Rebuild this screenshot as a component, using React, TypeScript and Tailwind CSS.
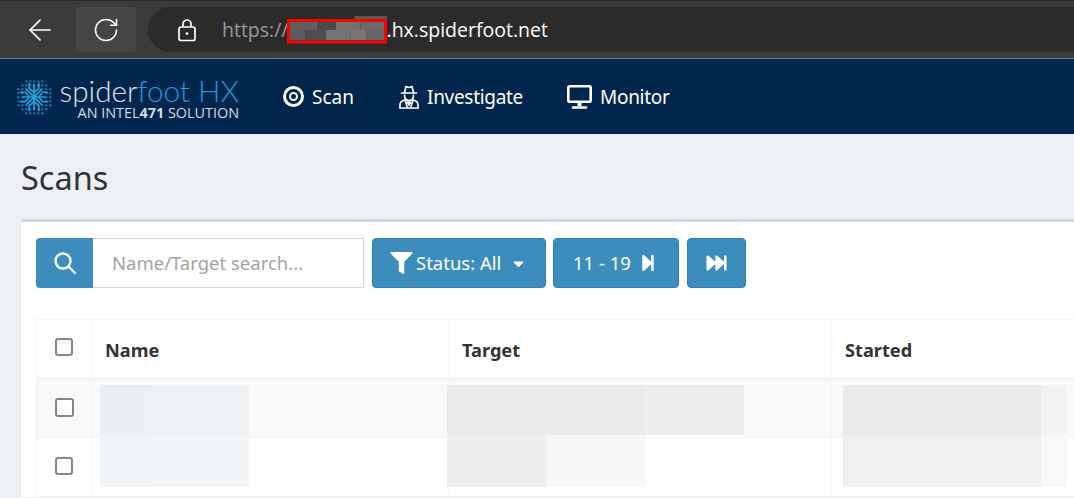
import { ArrowLeft, RotateCw } from "lucide-react";
import { FaFilter, FaStepForward, FaFastForward, FaCaretDown } from "react-icons/fa";

const PIXELS = [
  [0, 4, 30, 10, "#5f5f5f"], [30, 4, 18, 10, "#4a4a4a"], [48, 4, 24, 10, "#76706c"], [72, 4, 26, 10, "#6a6a6a"],
  [0, 14, 18, 10, "#5c5c5c"], [18, 14, 20, 10, "#4e4e4e"], [38, 14, 24, 10, "#6e7478"], [62, 14, 16, 10, "#7c7672"],
  [78, 14, 20, 10, "#666666"], [66, 0, 32, 4, "#5a5a5a"], [0, 24, 98, 3, "#383838"],
];

function Logo() {
  const dots: [number, number][] = [];
  for (let x = 0; x < 9; x++) for (let y = 0; y < 9; y++) {
    const d = Math.hypot(x - 4, y - 4);
    if (d > 2.6 && d < 4.7) dots.push([2.5 + x * 4.2, 2.5 + y * 4.2]);
  }
  return (
    <svg viewBox="0 0 38 38" className="h-[36px] w-[36px] shrink-0">
      {dots.map(([x, y], i) => <circle key={i} cx={x} cy={y} r="1.3" fill="#17729f" />)}
      <g stroke="#22a3dc" strokeWidth="1.8" fill="none">
        <path d="M19 5v28M7 19h24M11 11l16 16M27 11L11 27" />
        <path d="M14 4v6l5 4M24 4v6l-5 4M14 34v-6l5-4M24 34v-6l-5-4M4 14h6l4 5M4 24h6l4-5M34 14h-6l-4 5M34 24h-6l-4-5" />
      </g>
    </svg>
  );
}

function SpyIcon() {
  return (
    <svg viewBox="0 0 20 24" className="h-[24px] w-[20px] shrink-0" fill="none" stroke="white" strokeWidth="1.7" strokeLinejoin="round" strokeLinecap="round">
      <path d="M5.500 7.500 7 1.500l3 1 3-1 1.500 6" />
      <path d="M2.500 8h15" />
      <path d="M5.500 10c0 3.500 1.800 5.500 4.500 5.500s4.500-2 4.500-5.500" />
      <path d="M1 23v-3c0-2.500 2-4.500 5-5l2.500 8M19 23v-3c0-2.500-2-4.500-5-5l-2.500 8" />
      <path d="M1 23h18M8.500 17h3L10 20z" />
    </svg>
  );
}

function MonitorIcon() {
  return (
    <svg viewBox="0 0 25 24" className="h-[24px] w-[25px] shrink-0" fill="none" stroke="white" strokeWidth="2.600" strokeLinejoin="round">
      <rect x="1.300" y="1.300" width="22.400" height="15.400" rx="1.500" />
      <path d="M12.500 17v4" strokeWidth="4" />
      <path d="M6 22.500h13" strokeLinecap="round" />
    </svg>
  );
}

function Box({ big }: { big?: boolean }) {
  return <span className={`block rounded-[3px] border-2 border-[#858585] bg-white ${big ? "h-[19px] w-[19px]" : "h-[18px] w-[18px]"}`} />;
}

function Row({ tone, big, lift, height }: { tone: string; big?: boolean; lift: string; height: string }) {
  return (
    <div className={`grid grid-cols-[55px_357px_383px_1fr] border-b border-l border-[#f4f4f4] ${height} ${tone}`}>
      <div className={`flex items-center justify-center border-r border-[#f4f4f4] ${lift}`}><Box big={big} /></div>
      <div className="border-r border-[#f4f4f4]" />
      <div className="border-r border-[#f4f4f4]" />
      <div />
    </div>
  );
}

const PATCHES = [
  ["left-[64px] top-[66px] h-[50px] w-[50px]", "bg-[#eceff1]"], ["left-[114px] top-[66px] h-[50px] w-[99px]", "bg-[#eef1f3]"],
  ["left-[411px] top-[66px] h-[50px] w-[99px]", "bg-[#ebebeb]"], ["left-[510px] top-[66px] h-[50px] w-[99px]", "bg-[#ebebeb]"], ["left-[609px] top-[66px] h-[50px] w-[99px]", "bg-[#edeeee]"],
  ["left-[807px] top-[66px] h-[50px] w-[99px]", "bg-[#eaeaea]"], ["left-[906px] top-[66px] h-[50px] w-[99px]", "bg-[#ebebeb]"], ["left-[1005px] top-[66px] h-[50px] w-[26px]", "bg-[#f3f3f3]"],
  ["left-[64px] top-[116px] h-[52px] w-[50px]", "bg-[#f1f5f8]"], ["left-[114px] top-[116px] h-[52px] w-[99px]", "bg-[#f2f6f9]"],
  ["left-[411px] top-[116px] h-[52px] w-[99px]", "bg-[#eeeeee]"], ["left-[510px] top-[116px] h-[52px] w-[99px]", "bg-[#f7f7f7]"], ["left-[609px] top-[116px] h-[52px] w-[99px]", "bg-[#fdfdfd]"],
  ["left-[807px] top-[116px] h-[52px] w-[99px]", "bg-[#efefef]"], ["left-[906px] top-[116px] h-[52px] w-[99px]", "bg-[#efefef]"], ["left-[1005px] top-[116px] h-[52px] w-[26px]", "bg-[#f8f8f8]"],
];

export default function App() {
  return (
    <div className="h-[498px] w-[1074px] overflow-hidden bg-[#ecf0f5] font-['Noto_Sans',sans-serif]">
      {/* browser bar */}
      <div className="flex h-[59px] items-center border-y border-t-[#2a2a2a] border-b-[#7a7a7a] bg-[#3b3b3b] pl-[23px]">
        <div className="flex w-[53px] items-center"><ArrowLeft className="h-[34px] w-[34px] text-white" strokeWidth={1.200} /></div>
        <div className="flex h-[45px] w-[60px] items-center justify-center rounded-[4px] bg-[#454545]"><RotateCw className="h-[28px] w-[28px] text-white" strokeWidth={1.300} /></div>
        <div className="ml-[12px] flex h-[45px] flex-1 items-center rounded-l-[22px] bg-[#2b2b2b] pl-[29px]">
          <svg viewBox="0 0 20 24" className="h-[24px] w-[20px] shrink-0" fill="none" stroke="white" strokeWidth="1.700">
            <rect x="2" y="9" width="16" height="13.500" rx="2" />
            <path d="M6 9V6a4 4 0 0 1 8 0v3" />
            <circle cx="10" cy="15.500" r="1.300" fill="white" stroke="none" />
          </svg>
          <span className="ml-[25px] font-['Open_Sans',sans-serif] text-[19.500px] text-[#9a9a9a]">https://</span>
          <span className="relative ml-[-2px] h-[28px] w-[100px] shrink-0">
            <svg viewBox="0 0 98 28" preserveAspectRatio="none" className="absolute inset-0 h-[28px] w-[100px]">
              {PIXELS.map(([x, y, w, h, c], i) => <rect key={i} x={x as number} y={y as number} width={w as number} height={h as number} fill={c as string} />)}
              <rect x="1.500" y="4.500" width="95" height="21.500" fill="none" stroke="#ff0000" strokeWidth="3" />
            </svg>
          </span>
          <span className="font-['Open_Sans',sans-serif] text-[19.500px] text-white">.hx.spiderfoot.net</span>
        </div>
      </div>

      {/* nav */}
      <div className="flex h-[75px] items-stretch bg-[#00264d] text-white">
        <div className="flex w-[262px] items-center gap-[9px] pl-[16px]">
          <Logo />
          <div className="flex w-[178px] flex-col items-end whitespace-nowrap pt-[4px]">
            <div className="font-['Lato',sans-serif] text-[29.700px] font-light leading-[29px] text-[#dfe4ea]">spider<span className="text-[#1c9ad8]">foot HX</span></div>
            <div className="font-['Open_Sans',sans-serif] text-[14.400px] font-normal leading-[16px] text-[#d5dbe2]">AN INTEL<b className="font-bold">471</b> SOLUTION</div>
          </div>
        </div>
        <div className="flex w-[116px] items-center gap-[8px] bg-[#00244a] pl-[21px] text-[19px]">
          <span className="flex h-[21px] w-[21px] shrink-0 items-center justify-center rounded-full border-[3px] border-white"><span className="h-[9px] w-[9px] rounded-full border-2 border-white" /></span>
          <span className="pt-[2px]">Scan</span>
        </div>
        <div className="flex w-[168px] items-center gap-[8px] pl-[21px] text-[19px] tracking-[-0.300px]"><SpyIcon /><span className="pt-[2px]">Investigate</span></div>
        <div className="flex items-center gap-[8px] pl-[21px] text-[19px] tracking-[-0.300px]"><MonitorIcon /><span className="pt-[2px]">Monitor</span></div>
      </div>

      <h1 className="mt-[24px] pl-[21px] text-[32.500px] leading-[40px] text-[#333]">Scans</h1>

      {/* card */}
      <div className="relative ml-[21px] mt-[21px] rounded-tl-[3px] border-t-[3px] border-[#d2d6de] bg-white pl-[15px] pt-[16px]">
        <div className="flex h-[50px] text-[18.500px] text-white">
          <div className="flex w-[57px] items-center justify-center rounded-l-[4px] bg-[#3c8dbc]">
            <svg viewBox="0 0 24 24" className="h-[24px] w-[24px]" fill="none" stroke="white" strokeWidth="2.400" strokeLinecap="round"><circle cx="10" cy="10" r="7.500" /><path d="m16 16 6 6" /></svg>
          </div>
          <div className="flex w-[271px] items-center border border-l-0 border-[#d2d6de] pl-[19px] text-[#a3a3a3]">Name/Target search...</div>
          <button className="ml-[8px] flex w-[174px] items-center rounded-[4px] border border-[#367fa9] bg-[#3c8dbc] pl-[17px]">
            <FaFilter className="h-[22px] w-[23px]" /><span className="ml-[3px]">Status: All</span><FaCaretDown className="ml-[10px] h-[17px] w-[15px]" />
          </button>
          <button className="ml-[7px] flex w-[126px] items-center rounded-[4px] border border-[#367fa9] bg-[#3c8dbc] pl-[19px]">
            11 - 19<FaStepForward className="ml-[9px] h-[20px] w-[16px]" />
          </button>
          <button className="ml-[8px] flex w-[59px] items-center justify-center rounded-[4px] border border-[#367fa9] bg-[#3c8dbc]"><FaFastForward className="h-[20px] w-[25px]" /></button>
        </div>

        <div className="relative mt-[31px]">
          <div className="grid h-[61px] grid-cols-[55px_357px_383px_1fr] border-t border-b-[3px] border-l border-[#f4f4f4] text-[18.200px] font-bold text-[#333]">
            <div className="flex items-center justify-center border-r border-[#f4f4f4] pb-[4px]"><Box /></div>
            <div className="flex items-center border-r border-[#f4f4f4] pl-[13px] pt-[4px]">Name</div>
            <div className="flex items-center border-r border-[#f4f4f4] pl-[13px] pt-[4px]">Target</div>
            <div className="flex items-center pl-[13px] pt-[4px]">Started</div>
          </div>
          <Row tone="bg-[#f9f9f9]" big lift="pb-[3px]" height="h-[58px]" />
          <Row tone="bg-white" lift="pb-[2px]" height="h-[59px]" />
          {PATCHES.map(([pos, tone], i) => <div key={i} className={`absolute ${pos} ${tone}`} />)}
        </div>
      </div>
    </div>
  );
}
